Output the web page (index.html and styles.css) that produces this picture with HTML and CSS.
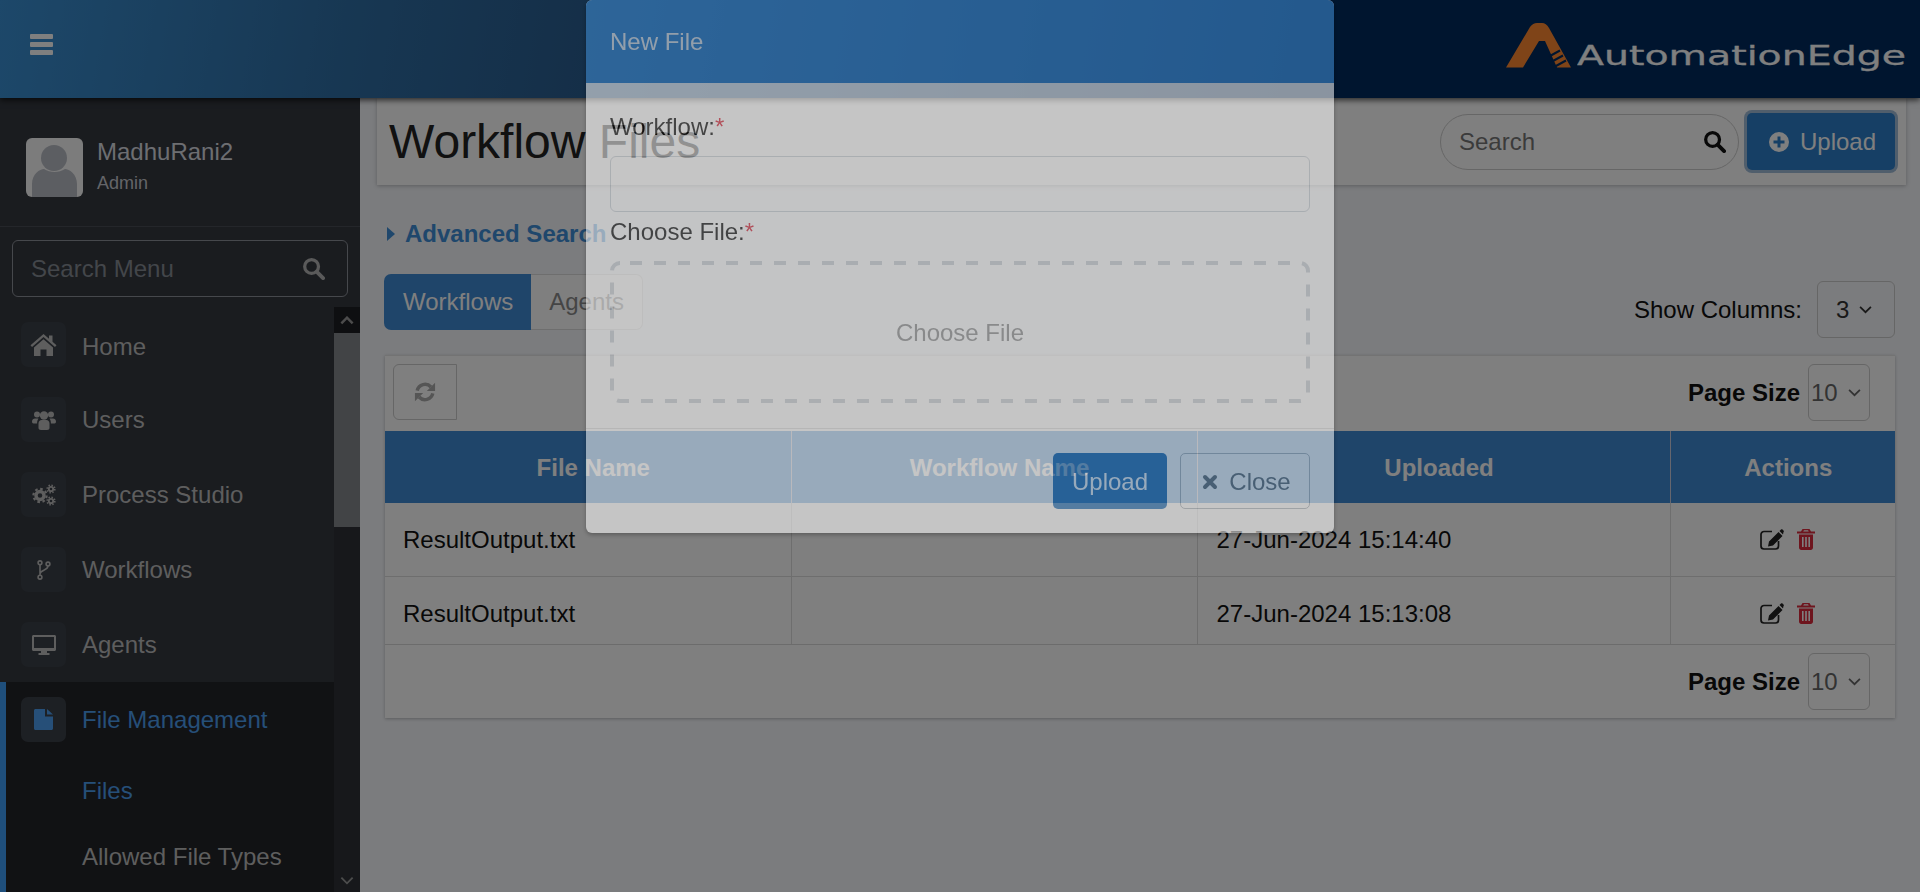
FILE: index.html
```html
<!DOCTYPE html>
<html lang="en">
<head>
  <meta charset="UTF-8" />
  <meta name="viewport" content="width=device-width, initial-scale=1.0" />
  <title>Workflow Files - AutomationEdge</title>
  <link rel="stylesheet" href="styles.css">
</head>
<body>

<svg class="sprite" xmlns="http://www.w3.org/2000/svg">
  <symbol id="i-search" viewBox="0 0 24 24"><circle cx="10" cy="10" r="7.2" fill="none" stroke="currentColor" stroke-width="3.4"/><path d="M15.5 15.5 22 22" stroke="currentColor" stroke-width="4" stroke-linecap="round"/></symbol>
  <symbol id="i-home" viewBox="0 0 27 24"><path fill="currentColor" d="M13.5 1 .5 12.2l1.5 1.7L13.5 4l11.5 9.9 1.5-1.7-4-3.5V2.500h-3.500v3.200z M13.500 6.200 4 14.400V23h6.500v-6.500h6V23H23v-8.600z"/></symbol>
  <symbol id="i-users" viewBox="0 0 24 22"><g fill="currentColor"><circle cx="5" cy="5.500" r="3"/><circle cx="19" cy="5.500" r="3"/><circle cx="12" cy="6.500" r="4.200"/><path d="M0 12.500c0-2 1.500-3 3-3h3.500c-.8 1.200-1.500 2.800-1.400 5H1.500C.6 14.500 0 13.600 0 12.500zM24 12.500c0-2-1.500-3-3-3h-3.500c.8 1.200 1.500 2.800 1.400 5h3.600c.9 0 1.500-.9 1.500-2zM6.500 14.500c0-2 1.500-3.500 3-3.500h5c1.500 0 3 1.500 3 3.500V19c0 1.200-1 2-2.500 2H9c-1.500 0-2.500-.8-2.500-2z"/></g></symbol>
  <symbol id="i-cogs" viewBox="0 0 24 22"><g fill="none" stroke="currentColor"><circle cx="8" cy="11.500" r="4" stroke-width="3.400"/><circle cx="8" cy="11.500" r="6.600" stroke-width="2.200" stroke-dasharray="2.600 2.580"/><circle cx="19" cy="5" r="2.200" stroke-width="1.800"/><circle cx="19" cy="5" r="3.800" stroke-width="1.600" stroke-dasharray="1.500 1.480"/><circle cx="19" cy="17" r="2.200" stroke-width="1.800"/><circle cx="19" cy="17" r="3.800" stroke-width="1.600" stroke-dasharray="1.500 1.480"/></g></symbol>
  <symbol id="i-fork" viewBox="0 0 14 20"><g fill="none" stroke="currentColor" stroke-width="1.600"><circle cx="3" cy="2.800" r="1.900"/><circle cx="3" cy="17.200" r="1.900"/><circle cx="11" cy="4" r="1.900"/><path d="M3 4.700v10.600M11 6c0 4.500-8 4-8 8"/></g></symbol>
  <symbol id="i-desktop" viewBox="0 0 24 20"><path fill="currentColor" fill-rule="evenodd" d="M1.500 0h21c.8 0 1.500.7 1.500 1.500v13c0 .8-.7 1.500-1.500 1.500H15v2h2.500v2h-11v-2H9v-2H1.500C.7 16 0 15.300 0 14.500v-13C0 .7.700 0 1.500 0zM2 2v11h20V2z"/></symbol>
  <symbol id="i-file" viewBox="0 0 20 21"><path fill="currentColor" d="M1.500 0H11v7.500h8V19.500c0 .8-.7 1.500-1.500 1.500h-16C.7 21 0 20.300 0 19.500v-18C0 .7.700 0 1.500 0zM13 0l6 5.500h-6z"/></symbol>
  <symbol id="i-refresh" viewBox="0 0 24 24"><g fill="none" stroke="currentColor" stroke-width="3.800"><path d="M3.500 10.500A8.800 8.800 0 0 1 18.500 6.500"/><path d="M20.500 13.500A8.800 8.800 0 0 1 5.500 17.500"/></g><path fill="currentColor" d="M23 2v9h-9zM1 22v-9h9z"/></symbol>
  <symbol id="i-edit" viewBox="0 0 24 21"><path fill="none" stroke="currentColor" stroke-width="1.700" d="M12 2.500H4A3 3 0 0 0 1 5.500v11.500a3 3 0 0 0 3 3h11.500a3 3 0 0 0 3-3V12"/><path fill="currentColor" d="M8 17.500l1-5L18.500 3l4 4-9.500 9.500zM19.500 2 21 .5c.5-.5 1-.5 1.500 0l1 1c.5.500.5 1 0 1.500L23 5.500z"/></symbol>
  <symbol id="i-trash" viewBox="0 0 18 21"><path fill="currentColor" fill-rule="evenodd" d="M5.500 0h7L14 2.500h4V4.500H0V2.500h4zM7 1.300 6.200 2.500h5.600L11 1.300zM2 5.500h14V18.500c0 1.500-1 2.500-2.200 2.500H4.200C3 21 2 20 2 18.500zM5 8v10h1.600V8zM8.200 8v10h1.600V8zM11.400 8v10H13V8z"/></symbol>
  <symbol id="i-times" viewBox="0 0 16 16"><path d="M3 3l10 10M13 3 3 13" stroke="currentColor" stroke-width="4" stroke-linecap="round"/></symbol>
  <symbol id="i-plus" viewBox="0 0 20 20"><path fill="currentColor" fill-rule="evenodd" d="M10 0a10 10 0 1 1 0 20 10 10 0 0 1 0-20zM8.500 4.500V8.500H4.500v3h4v4h3v-4h4v-3h-4V4.500z"/></symbol>
  <symbol id="i-chev-down" viewBox="0 0 12 8"><path d="M1 1.500l5 5 5-5" fill="none" stroke="currentColor" stroke-width="1.600"/></symbol>
  <symbol id="i-chev-up" viewBox="0 0 12 8"><path d="M1 6.500l5-5 5 5" fill="none" stroke="currentColor" stroke-width="2.200"/></symbol>
</svg>

<header class="topbar">
  <span class="bars"><i></i><i></i><i></i></span>
  <div class="logo">
    <svg class="logo-mark" viewBox="0 0 65 45" width="65" height="45">
      <path fill="#ff8830" d="M0 44.500 24 4Q27 0 31 0H36Q40 0 43 5L65 44.500H51L39 18H33L17 44.500z"/>
      <path fill="none" stroke="#002a5e" stroke-width="2" d="M43 33.500l11-6M46 38.500l11-6M49 43.500l11-6"/>
    </svg>
    <svg class="logo-word" viewBox="0 0 330 34" width="330" height="34">
      <text x="0" y="25" textLength="329" lengthAdjust="spacingAndGlyphs">AutomationEdge</text>
    </svg>
  </div>
</header>

<div class="layout">
  <aside class="sidebar">
    <div class="user-panel">
      <div class="avatar">
        <svg viewBox="0 0 57 59" width="57" height="59"><circle cx="28" cy="20" r="13" fill="#b8bcc4"/><path fill="#b8bcc4" d="M6 59V46c0-10 8-15 12-15 6 4 15 4 21 0 4 0 12 5 12 15v13z"/></svg>
      </div>
      <div>
        <div class="user-name">MadhuRani2</div>
        <div class="user-role">Admin</div>
      </div>
    </div>

    <div class="menu-search">
      <span>Search Menu</span>
      <svg class="ic-search"><use href="#i-search"/></svg>
    </div>

    <div class="menu-wrap">
      <ul class="menu">
        <li><span class="icon-box"><svg width="27" height="24"><use href="#i-home"/></svg></span>Home</li>
        <li><span class="icon-box"><svg width="24" height="22"><use href="#i-users"/></svg></span>Users</li>
        <li><span class="icon-box"><svg width="24" height="22"><use href="#i-cogs"/></svg></span>Process Studio</li>
        <li><span class="icon-box"><svg width="14" height="20"><use href="#i-fork"/></svg></span>Workflows</li>
        <li><span class="icon-box"><svg width="24" height="20"><use href="#i-desktop"/></svg></span>Agents</li>
        <li class="open">
          <div class="menu-item active"><span class="icon-box"><svg width="20" height="21"><use href="#i-file"/></svg></span>File Management</div>
          <div class="sub-item active">Files</div>
          <div class="sub-item">Allowed File Types</div>
        </li>
      </ul>
      <div class="scrollbar">
        <span class="sb-btn"><svg width="14" height="9"><use href="#i-chev-up"/></svg></span>
        <span class="sb-thumb"></span>
        <span class="sb-track"></span>
        <span class="sb-end"><svg width="14" height="9"><use href="#i-chev-down"/></svg></span>
      </div>
    </div>
  </aside>

  <main class="content">
    <div class="page-head">
      <h1>Workflow Files</h1>
      <div class="head-tools">
        <div class="pill-search">
          <span>Search</span>
          <svg class="ic-search"><use href="#i-search"/></svg>
        </div>
        <button class="btn-upload"><svg width="20" height="20"><use href="#i-plus"/></svg>Upload</button>
      </div>
    </div>

    <div class="adv-search"><span class="caret"></span>Advanced Search</div>

    <div class="tabs-row">
      <div class="tabs">
        <span class="tab active">Workflows</span>
        <span class="tab">Agents</span>
      </div>
      <div class="show-cols">
        Show Columns:
        <div class="select cols-select">3<svg width="13" height="9"><use href="#i-chev-down"/></svg></div>
      </div>
    </div>

    <section class="grid">
      <div class="grid-bar grid-top">
        <span class="btn-refresh"><svg width="22" height="22"><use href="#i-refresh"/></svg></span>
        <div class="page-size">Page Size <div class="select size-select">10<svg width="13" height="9"><use href="#i-chev-down"/></svg></div></div>
      </div>
      <table>
        <colgroup><col class="c-name"><col class="c-name"><col class="c-date"><col></colgroup>
        <thead>
          <tr><th>File Name</th><th>Workflow Name</th><th>Uploaded</th><th>Actions</th></tr>
        </thead>
        <tbody>
          <tr>
            <td>ResultOutput.txt</td><td></td><td>27-Jun-2024 15:14:40</td>
            <td class="actions"><svg class="ic-edit" width="24" height="21"><use href="#i-edit"/></svg><svg class="ic-trash" width="18" height="21"><use href="#i-trash"/></svg></td>
          </tr>
          <tr>
            <td>ResultOutput.txt</td><td></td><td>27-Jun-2024 15:13:08</td>
            <td class="actions"><svg class="ic-edit" width="24" height="21"><use href="#i-edit"/></svg><svg class="ic-trash" width="18" height="21"><use href="#i-trash"/></svg></td>
          </tr>
        </tbody>
      </table>
      <div class="grid-bar grid-bottom">
        <div class="page-size">Page Size <div class="select size-select">10<svg width="13" height="9"><use href="#i-chev-down"/></svg></div></div>
      </div>
    </section>
  </main>
</div>

<div class="overlay"></div>

<div class="modal">
  <div class="modal-head">New File</div>
  <div class="modal-body">
    <label>Workflow:<span class="req">*</span></label>
    <div class="modal-input"></div>
    <label class="file-label">Choose File:<span class="req">*</span></label>
    <div class="dropzone">
      <svg class="dash" viewBox="0 0 700 142" width="700" height="142"><rect x="2" y="2" width="696" height="138" rx="8" fill="none" stroke="#d0d4da" stroke-width="4" stroke-dasharray="12 12" stroke-dashoffset="-10"/></svg>
      Choose File
    </div>
  </div>
  <div class="modal-foot">
    <button class="btn-primary">Upload</button>
    <button class="btn-close"><svg width="16" height="16"><use href="#i-times"/></svg>Close</button>
  </div>
</div>

</body>
</html>
```

FILE: styles.css
```css
* {
  box-sizing: border-box;
}
html, body {
  height: 100%;
}
body {
  margin: 0;
  overflow: hidden;
  font-family: "Liberation Sans", Arial, sans-serif;
  font-size: 24px;
  line-height: 28px;
  color: #222;
  background: #f6f8fc;
}
.sprite {
  display: none;
}
button {
  font: inherit;
}

/* top bar */
.topbar {
  position: relative;
  z-index: 2;
  height: 98px;
  display: flex;
  align-items: center;
  justify-content: space-between;
  padding: 0 13px 0 30px;
  background: linear-gradient(100deg, #3a90d4 0%, #2f6fa6 18%, #2a5f92 30%, #002a5e 70%, #002a5e 100%);
  box-shadow: 0 2px 6px rgba(0,0,0,.7);
}
.bars {
  display: flex;
  flex-direction: column;
  gap: 3px;
  margin-top: -10px;
}
.bars i {
  display: block;
  width: 23px;
  height: 5px;
  border-radius: 1px;
  background: #fff;
}
.logo {
  display: flex;
  align-items: flex-end;
  gap: 6px;
  margin-top: -8px;
}
.logo-word {
  margin-bottom: -6px;
}
.logo-word text {
  font-family: "DejaVu Sans", sans-serif;
  font-size: 27px;
  fill: #fff;
  stroke: #fff;
  stroke-width: .3px;
}

.layout {
  display: flex;
  height: calc(100vh - 98px);
}

/* sidebar */
.sidebar {
  width: 360px;
  flex: none;
  display: flex;
  flex-direction: column;
  background: #34383f;
  color: #bcbcbc;
  overflow: hidden;
}
.user-panel {
  height: 129px;
  padding: 40px 0 0 26px;
  display: flex;
  gap: 14px;
  border-bottom: 1px solid #484c54;
}
.avatar {
  width: 57px;
  height: 59px;
  border-radius: 6px;
  background: #f8f8f8;
  overflow: hidden;
}
.user-name {
  color: #dadce2;
}
.user-role {
  margin-top: 6px;
  font-size: 18px;
  line-height: 22px;
  color: #c8cad0;
}
.menu-search {
  height: 57px;
  margin: 13px 12px 10px;
  padding: 0 22px 0 18px;
  display: flex;
  align-items: center;
  justify-content: space-between;
  border: 1px solid #8c9098;
  border-radius: 6px;
  color: #868c94;
}
.menu-search .ic-search {
  color: #b4b4b4;
}
.ic-search {
  width: 23px;
  height: 23px;
}
.menu-wrap {
  flex: 1;
  min-height: 0;
  display: flex;
}
.menu {
  width: 334px;
  flex: none;
  margin: 0;
  padding: 0;
  list-style: none;
}
.menu > li:not(.open), .menu-item {
  height: 75px;
  display: flex;
  align-items: center;
  padding-left: 21px;
}
.menu > li:first-child {
  padding-top: 4px;
}
.menu > li:first-child .icon-box {
  margin-top: -4px;
}
.icon-box {
  width: 45px;
  height: 45px;
  margin-right: 16px;
  display: flex;
  align-items: center;
  justify-content: center;
  border-radius: 7px;
  background: #3b4048;
}
.open {
  background: #222428;
  border-left: 6px solid #3f9ef8;
  height: 240px;
}
.open .menu-item {
  padding-left: 15px;
}
.sub-item {
  height: 66px;
  padding: 2px 0 0 76px;
  display: flex;
  align-items: center;
}
.menu-item.active, .sub-item.active {
  color: #4c9ef0;
}
.scrollbar {
  width: 26px;
  flex: none;
  display: flex;
  flex-direction: column;
  color: #999;
}
.sb-btn {
  height: 26px;
  display: flex;
  align-items: center;
  justify-content: center;
  background: #1c1e22;
}
.sb-thumb {
  height: 194px;
  background: #84888c;
}
.sb-track {
  flex: 1;
  background: #2e3137;
}
.sb-end {
  height: 24px;
  display: flex;
  align-items: center;
  justify-content: center;
  background: #2e3137;
}

/* main area */
.content {
  flex: 1;
  min-width: 0;
  padding: 0 25px 0 24px;
}
.page-head {
  height: 87px;
  margin: 0 -11px 0 -7px;
  padding: 0 11px 0 12px;
  display: flex;
  align-items: center;
  justify-content: space-between;
  background: #fff;
  box-shadow: 0 1px 4px rgba(0,0,0,.25);
}
h1 {
  margin: 0;
  font-size: 48px;
  font-weight: normal;
  line-height: 54px;
  color: #222;
}
.head-tools {
  display: flex;
  align-items: center;
  gap: 8px;
}
.pill-search {
  width: 299px;
  height: 56px;
  padding: 0 12px 0 18px;
  display: flex;
  align-items: center;
  justify-content: space-between;
  border: 1px solid #ccc;
  border-radius: 28px;
  color: #777;
}
.pill-search .ic-search {
  color: #111;
}
.btn-upload {
  width: 148px;
  height: 57px;
  padding: 0 0 0 3px;
  display: flex;
  align-items: center;
  justify-content: center;
  gap: 11px;
  border: none;
  border-radius: 5px;
  background: #2c7eca;
  color: #fff;
  box-shadow: 0 0 0 3px #a0bcd8;
}
.adv-search {
  margin-top: 35px;
  display: flex;
  align-items: center;
  font-weight: bold;
  color: #3f8fd8;
}
.caret {
  width: 0;
  height: 0;
  margin: 0 10px 0 3px;
  border-left: 8px solid #3f8fd8;
  border-top: 7px solid transparent;
  border-bottom: 7px solid transparent;
}
.tabs-row {
  margin-top: 26px;
  display: flex;
  justify-content: space-between;
  align-items: flex-start;
}
.tabs {
  display: flex;
}
.tab {
  height: 56px;
  padding: 0 18px 0 18px;
  display: flex;
  align-items: center;
  border: 1px solid #ddd;
  border-left: none;
  border-radius: 0 7px 7px 0;
  background: #fff;
  color: #8a8a8a;
}
.tab.active {
  padding: 0 18px 0 19px;
  border: none;
  border-radius: 7px 0 0 7px;
  background: #3f8ad4;
  color: #fff;
}
.show-cols {
  display: flex;
  align-items: center;
  gap: 15px;
  margin-top: 7px;
  color: #111;
}
.select {
  display: flex;
  align-items: center;
  justify-content: space-between;
  border: 1px solid #ccc;
  border-radius: 6px;
}
.cols-select {
  width: 78px;
  height: 57px;
  padding: 0 22px 0 18px;
  color: #333;
}
.size-select {
  width: 62px;
  height: 57px;
  padding: 0 8px 0 2px;
  font-weight: normal;
  color: #666;
}

/* grid */
.grid {
  margin: 17px 0 0 1px;
  background: #fff;
  box-shadow: 0 1px 3px rgba(0,0,0,.25);
}
.grid-bar {
  display: flex;
  justify-content: flex-end;
  align-items: flex-start;
}
.grid-top {
  height: 76px;
  padding: 8px 25px 0 8px;
  justify-content: space-between;
  border-top: 1px solid #e6e6e6;
}
.grid-bottom {
  height: 74px;
  padding: 8px 25px 0 8px;
  border-top: 1px solid #d8d8d8;
}
.page-size {
  display: flex;
  align-items: center;
  gap: 8px;
  font-weight: bold;
  color: #111;
}
.btn-refresh {
  width: 64px;
  height: 56px;
  display: flex;
  align-items: center;
  justify-content: center;
  border: 1px solid #ccc;
  border-radius: 6px 0 0 6px;
  color: #aaa;
}
table {
  width: 100%;
  table-layout: fixed;
  border-collapse: collapse;
}
.c-name {
  width: 406px;
}
.c-date {
  width: 473px;
}
th {
  height: 72px;
  padding: 2px 1px 0 12px;
  background: #3f8ad4;
  color: #fff;
  border-left: 1px solid #ccd;
  font-weight: bold;
}
th:first-child, td:first-child {
  border-left: none;
}
td {
  height: 73px;
  padding: 23px 18px 0;
  vertical-align: top;
  border-left: 1px solid #ddd;
  border-bottom: 1px solid #ddd;
  color: #111;
}
td:nth-child(3) {
  padding-left: 19px;
}
tbody tr:last-child td {
  height: 68px;
  border-bottom: none;
}
.actions {
  text-align: center;
  padding: 26px 8px 0 18px;
}
.actions svg {
  vertical-align: top;
}
.ic-edit {
  color: #222;
  margin-right: 13px;
}
.ic-trash {
  color: #dc2a3c;
}

/* overlay and dialog */
.overlay {
  position: fixed;
  inset: 0;
  z-index: 10;
  background: rgba(0,0,0,.5);
}
.modal {
  position: fixed;
  top: 0;
  left: 586px;
  z-index: 11;
  width: 748px;
  height: 533px;
  border-radius: 6px;
  background: #fff;
  opacity: .54;
  overflow: hidden;
  box-shadow: 0 2px 4px rgba(0,0,0,.5);
}
.modal-head {
  height: 83px;
  padding: 0 24px;
  display: flex;
  align-items: center;
  background: #4492dd;
  color: #fff;
}
.modal-body {
  padding: 30px 24px 0;
}
.modal-body label {
  display: block;
  color: #111;
}
.req {
  color: #dc2a3c;
}
.modal-input {
  height: 56px;
  margin-top: 15px;
  border: 1px solid #ced4da;
  border-radius: 6px;
}
.file-label {
  margin-top: 6px;
}
.dropzone {
  position: relative;
  height: 142px;
  margin-top: 15px;
  padding-top: 2px;
  display: flex;
  align-items: center;
  justify-content: center;
  color: #949494;
}
.dash {
  position: absolute;
  top: 0;
  left: 0;
}
.modal-foot {
  margin-top: 25px;
  padding: 24px 24px 0;
  display: flex;
  justify-content: flex-end;
  gap: 13px;
  border-top: 1px solid #e4e4e4;
}
.btn-primary {
  width: 114px;
  height: 56px;
  padding: 2px 0 0;
  border: none;
  border-radius: 5px;
  background: #2f78bd;
  color: #fff;
}
.btn-close {
  width: 130px;
  height: 56px;
  padding: 2px 0 0 3px;
  display: flex;
  align-items: center;
  justify-content: center;
  gap: 11px;
  border: 1px solid #b8bec4;
  border-radius: 5px;
  background: transparent;
  color: #6c757d;
}
```
